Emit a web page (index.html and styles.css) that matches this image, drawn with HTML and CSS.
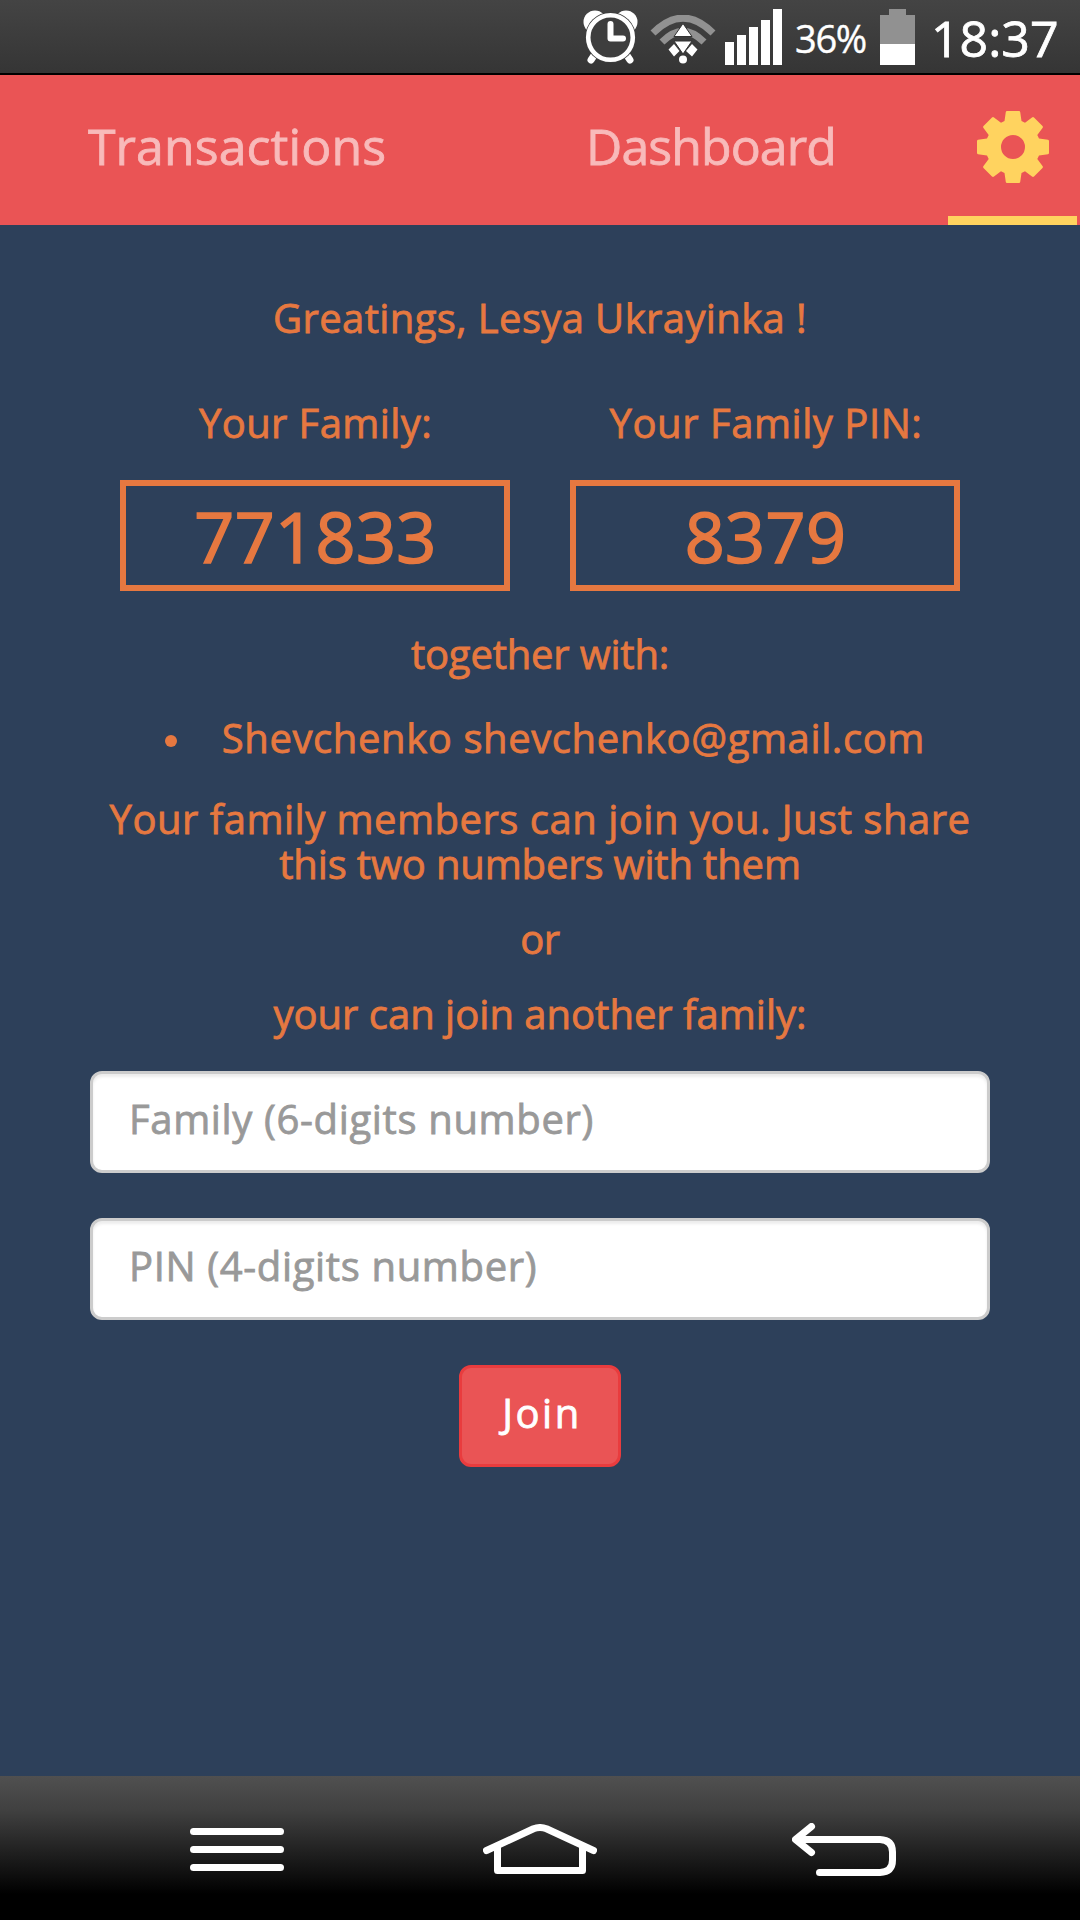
FILE: index.html
```html
<!DOCTYPE html>
<html lang="en">
<head>
<meta charset="utf-8">
<title>Family settings</title>
<link rel="stylesheet" href="styles.css">
</head>
<body>
<div class="status-bar">
  <svg class="alarm" width="56" height="56" viewBox="0 0 56 56">
    <g fill="#fff"><circle cx="12" cy="13" r="11.500"/><circle cx="43" cy="13" r="11.500"/></g>
    <path d="M12 45L8 51M43 45L47 51" stroke="#fff" stroke-width="7" stroke-linecap="round"/>
    <circle cx="27.500" cy="28.500" r="25.500" fill="#3e3e3e"/>
    <circle cx="27.500" cy="28.500" r="22.300" fill="#3e3e3e" stroke="#fff" stroke-width="4.600"/>
    <path d="M27.500 15V29.500H40" fill="none" stroke="#fff" stroke-width="6" stroke-linecap="round" stroke-linejoin="round"/>
  </svg>
  <svg class="wifi" width="66" height="50" viewBox="0 0 66 50">
    <g fill="none" stroke="#919191" stroke-width="7"><path d="M3 18Q33-12 63 18"/><path d="M12 27Q33 6 54 27"/></g>
    <path d="M18.500 34.500l5.500-5.500 5.500 7-5.500 5.500zM47.500 34.500l-5.500-5.500-6 7 6 5.500z" fill="#fff"/>
    <path d="M33 8.500L42 21.500H24zM24 26H42L33 39z" fill="#fff" stroke="#333" stroke-width="1"/>
    <circle cx="33" cy="44.500" r="4" fill="#fff"/>
  </svg>
  <svg class="signal" width="57" height="56" viewBox="0 0 57 56" fill="#fff">
    <path d="M0 33h9v23H0zM12 26h9v30h-9zM24 18h9v38h-9zM36 11h9v45h-9zM48 0h9v56h-9z"/>
  </svg>
  <span class="percent">36%</span>
  <svg class="battery" width="35" height="56" viewBox="0 0 35 56">
    <path fill="#919191" d="M9 0h17v6h9v29H0V6h9z"/><path fill="#fff" d="M0 35h35v21H0z"/>
  </svg>
  <span class="clock">18:37</span>
</div>
<nav class="tabs">
  <a class="tab transactions">Transactions</a>
  <a class="tab dashboard">Dashboard</a>
  <a class="tab settings">
    <svg width="74" height="74" viewBox="-37 -37 74 74">
      <path fill="#ffd35f" fill-rule="evenodd" d="M-6-36H6Q7-36 7.200-35L8.500-26 12-24.300 19-29.500Q20-30.300 21-29.500L29.500-21Q30.300-20 29.500-19L24.300-12 26-8.500 35-7.200Q36-7 36-6V6Q36 7 35 7.200L26 8.500 24.300 12 29.500 19Q30.300 20 29.500 21L21 29.500Q20 30.300 19 29.500L12 24.300 8.500 26 7.200 35Q7 36 6 36H-6Q-7 36-7.200 35L-8.500 26-12 24.300-19 29.500Q-20 30.300-21 29.500L-29.500 21Q-30.300 20-29.500 19L-24.300 12-26 8.500-35 7.200Q-36 7-36 6V-6Q-36-7-35-7.200L-26-8.500-24.300-12-29.500-19Q-30.300-20-29.500-21L-21-29.500Q-20-30.300-19-29.500L-12-24.300-8.500-26-7.200-35Q-7-36-6-36ZM0-12A12 12 0 1 0 0 12 12 12 0 1 0 0-12Z"/>
    </svg>
  </a>
</nav>
<main class="content">
  <p class="greeting">Greatings, Lesya Ukrayinka !</p>
  <section class="codes">
    <div class="code"><p class="family-label">Your Family:</p><div class="number">771833</div></div>
    <div class="code"><p class="pin-label">Your Family PIN:</p><div class="number">8379</div></div>
  </section>
  <p class="together">together with:</p>
  <ul class="members"><li>Shevchenko shevchenko@gmail.com</li></ul>
  <p class="invite"><span class="invite-first">Your family members can join you. Just share</span><br><span class="invite-second">this two numbers with them</span></p>
  <p class="or">or</p>
  <p class="join-label">your can join another family:</p>
  <form class="join-form">
    <input class="family-input" type="text" placeholder="Family (6-digits number)">
    <input class="pin-input" type="text" placeholder="PIN (4-digits number)">
    <button type="button">Join</button>
  </form>
</main>
<footer class="nav-bar">
  <svg width="94" height="43" viewBox="0 0 94 43" fill="#fff">
    <rect width="94" height="7" rx="3.500"/><rect y="18" width="94" height="7" rx="3.500"/><rect y="36" width="94" height="7" rx="3.500"/>
  </svg>
  <svg class="home" width="114" height="51" viewBox="0 0 114 51" fill="none" stroke="#fff" stroke-width="7" stroke-linecap="round" stroke-linejoin="round">
    <path d="M3.500 26.500L50.500 4.700Q57 2.300 63.500 4.700L110.500 26.500"/><path d="M14.500 24V46.500H99.500V24"/>
  </svg>
  <svg width="104" height="53" viewBox="0 0 104 53" fill="none" stroke="#fff" stroke-width="7" stroke-linecap="round" stroke-linejoin="round">
    <path d="M19.500 3.500L3.500 16.500 19.500 29.500M4 16.500H88Q100.500 17 100.500 29V37Q100.500 49 88 49.500H27.500"/>
  </svg>
</footer>
</body>
</html>
```
FILE: styles.css
```css
* { box-sizing: border-box; }
body {
  margin: 0;
  width: 1080px;
  height: 1920px;
  display: flex;
  flex-direction: column;
  overflow: hidden;
  background: #2d405a;
  font-family: "Open Sans", "Noto Sans", sans-serif;
  font-size: 40px;
  line-height: 45px;
  -webkit-text-stroke: .8px currentColor;
}
p, ul { margin: 0; padding: 0; }
svg { display: block; flex: none; }

.status-bar {
  height: 75px;
  flex: none;
  display: flex;
  align-items: center;
  justify-content: flex-end;
  padding-right: 23px;
  border-bottom: 2px solid #000;
  background: linear-gradient(#444, #353535);
  color: #fff;
}
.alarm { margin-right: 11px; }
.wifi { margin: 6px 9px 0 0; }
.signal { margin-right: 13px; }
.percent { width: 73px; margin-right: 12px; padding-top: 3px; font-size: 38px; letter-spacing: -1.300px; white-space: nowrap; -webkit-text-stroke-width: .4px; }
.battery { margin-right: 16px; }
.clock { width: 126px; padding-top: 3px; font-size: 50px; white-space: nowrap; }

.tabs {
  height: 150px;
  flex: none;
  display: flex;
  background: #ea5455;
  color: #f8baba;
  font-size: 50px;
}
.tab { display: flex; align-items: center; justify-content: center; padding-bottom: 7px; }
.transactions { width: 474px; letter-spacing: .100px; }
.dashboard { width: 474px; letter-spacing: -.900px; }
.settings { width: 129px; padding: 3px 0 0; border-bottom: 9px solid #ffd35f; }

.content {
  flex: 1;
  padding: 70px 90px 0;
  color: #e67840;
  text-align: center;
  white-space: nowrap;
}
.greeting { letter-spacing: .380px; }
.codes { display: flex; justify-content: center; gap: 60px; margin: 60px 0 40px; }
.code { width: 390px; }
.family-label { letter-spacing: .400px; padding-left: 1px; }
.pin-label { letter-spacing: .550px; padding-left: 2px; }
.number {
  height: 111px;
  margin-top: 35px;
  padding: 1px 0 0 1px;
  border: 6px solid #e67840;
  font-size: 70px;
  line-height: 99px;
  letter-spacing: .400px;
  -webkit-text-stroke-width: 1.600px;
}
.together { letter-spacing: -.200px; }
.members { display: flex; justify-content: flex-end; margin-top: 39px; padding-right: 65px; list-style: none; letter-spacing: .600px; }
.members li { display: flex; align-items: center; }
.members li::before { content: ""; width: 12px; height: 12px; margin: 7px 45px 0 0; border-radius: 50%; background: #e67840; }
.invite { margin: 36px 0 30px; }
.invite-first { letter-spacing: .500px; }
.invite-second { letter-spacing: -.150px; }
.or { letter-spacing: -.500px; }
.join-label { margin: 30px 0 35px; }

.join-form { display: flex; flex-direction: column; align-items: center; gap: 45px; }
input, button { height: 102px; border-radius: 12px; font: inherit; }
input {
  width: 900px;
  padding: 0 36px 7px;
  border: 3px solid #ccc;
  background: #fff;
  box-shadow: inset 0 3px 3px rgba(0, 0, 0, .075);
  letter-spacing: .650px;
  -webkit-text-stroke: .8px #999;
}
input::placeholder { color: #999; opacity: 1; }
button {
  width: 162px;
  padding: 0 0 7px 4px;
  border: 3px solid #e93c3e;
  background: #ea5455;
  color: #fff;
  letter-spacing: 2.500px;
  -webkit-text-stroke: .8px #fff;
}

.nav-bar {
  height: 144px;
  flex: none;
  display: flex;
  justify-content: space-between;
  align-items: center;
  padding: 3px 184px 0 190px;
  background: linear-gradient(#505050, #404040 24%, #000 82%);
}
.home { margin: 0 -2px 0 2px; }
```
